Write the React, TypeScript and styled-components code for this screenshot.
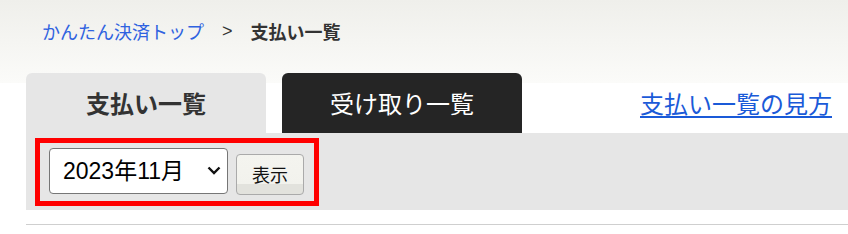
import React from 'react';
import styled, { createGlobalStyle } from 'styled-components';

const GlobalStyle = createGlobalStyle`
	html, body {
		margin: 0;
		padding: 0;
	}
	body {
		font-family: 'Liberation Sans', 'Noto Sans CJK JP', sans-serif;
		color: #333;
		background: linear-gradient(to bottom, #efefeb 0, #fbfbf9 83px, #fff 83px) no-repeat;
		background-color: #fff;
	}
`;

const Page = styled.div`
	width: 848px;
	overflow: hidden;
`;

const Breadcrumb = styled.nav`
	display: flex;
	align-items: center;
	height: 20px;
	padding: 21px 0 0 42px;
	font-size: 18px;
`;

const Crumb = styled.a`
	color: #2f62e0;
	text-decoration: none;
`;

const Sep = styled.span`
	margin: 0 18px 0 18px;
	color: #333;
`;

const Current = styled.strong`
	color: #333;
	font-weight: bold;
`;

const Content = styled.div`
	margin: 32px 0 0 26px;
`;

const TabRow = styled.div`
	display: flex;
	align-items: stretch;
	height: 60px;
`;

const Tab = styled.a<{ $active?: boolean }>`
	display: flex;
	align-items: center;
	justify-content: center;
	width: 240px;
	margin-right: 16px;
	border-radius: 6px 6px 0 0;
	font-size: 24px;
	font-weight: ${({ $active }) => ($active ? 'bold' : 'normal')};
	background: ${({ $active }) => ($active ? '#e6e6e6' : '#252525')};
	color: ${({ $active }) => ($active ? '#333' : '#fff')};
	text-decoration: none;
	padding-bottom: 2px;
`;

const HelpLink = styled.a`
	margin-left: auto;
	margin-right: 16px;
	align-self: center;
	font-size: 24px;
	color: #1a5ad8;
	text-decoration: underline;
	text-decoration-thickness: 2px;
	text-underline-offset: 3px;
	padding-bottom: 2px;
`;

const Panel = styled.div`
	background: #e6e6e6;
	height: 77px;
	padding: 5px 0 0 9px;
	box-sizing: border-box;
`;

const FilterBox = styled.form`
	display: inline-flex;
	align-items: flex-end;
	gap: 8px;
	border: 5px solid #ff0000;
	padding: 5px 10px 7px 9px;
`;

const SelectWrap = styled.div`
	position: relative;
	display: flex;
`;

const MonthSelect = styled.select`
	appearance: none;
	width: 179px;
	height: 46px;
	font-size: 23px;
	font-family: 'Liberation Sans', 'Noto Sans CJK JP', sans-serif;
	color: #000;
	background: #fff;
	border: 1px solid #767676;
	border-radius: 4px;
	padding: 0 30px 0 13px;
`;

const Chevron = styled.svg`
	position: absolute;
	right: 7px;
	top: 50%;
	margin-top: -5px;
	width: 14px;
	height: 9px;
	pointer-events: none;
`;

const ShowButton = styled.button`
	width: 68px;
	height: 41px;
	font-size: 18px;
	font-family: 'Noto Sans CJK JP', sans-serif;
	color: #111;
	background: linear-gradient(to bottom, #f4f4ef 0, #f2f2ed 75%, #e2e2dd 75%, #e2e2dd 100%);
	border: 1px solid #aaa;
	border-radius: 4px;
	padding: 0 0 2px;
	margin-bottom: -1px;
`;

const Rule = styled.hr`
	margin: 14px 0 0;
	border: 0;
	border-top: 1px solid #cfcfcf;
`;

export default function App() {
	return (
		<Page>
			<GlobalStyle />
			<Breadcrumb>
				<Crumb href="#">かんたん決済トップ</Crumb>
				<Sep>&gt;</Sep>
				<Current>支払い一覧</Current>
			</Breadcrumb>
			<Content>
				<TabRow>
					<Tab $active>支払い一覧</Tab>
					<Tab href="#">受け取り一覧</Tab>
					<HelpLink href="#">支払い一覧の見方</HelpLink>
				</TabRow>
				<Panel>
					<FilterBox onSubmit={(e) => e.preventDefault()}>
						<SelectWrap>
							<MonthSelect defaultValue="2023-11">
								<option value="2023-11">2023年11月</option>
								<option value="2023-10">2023年10月</option>
							</MonthSelect>
							<Chevron viewBox="0 0 14 9">
								<path d="M1.5 1.5 L7 7 L12.5 1.5" fill="none" stroke="#111" strokeWidth="2.4" />
							</Chevron>
						</SelectWrap>
						<ShowButton type="submit">表示</ShowButton>
					</FilterBox>
				</Panel>
				<Rule />
			</Content>
		</Page>
	);
}
